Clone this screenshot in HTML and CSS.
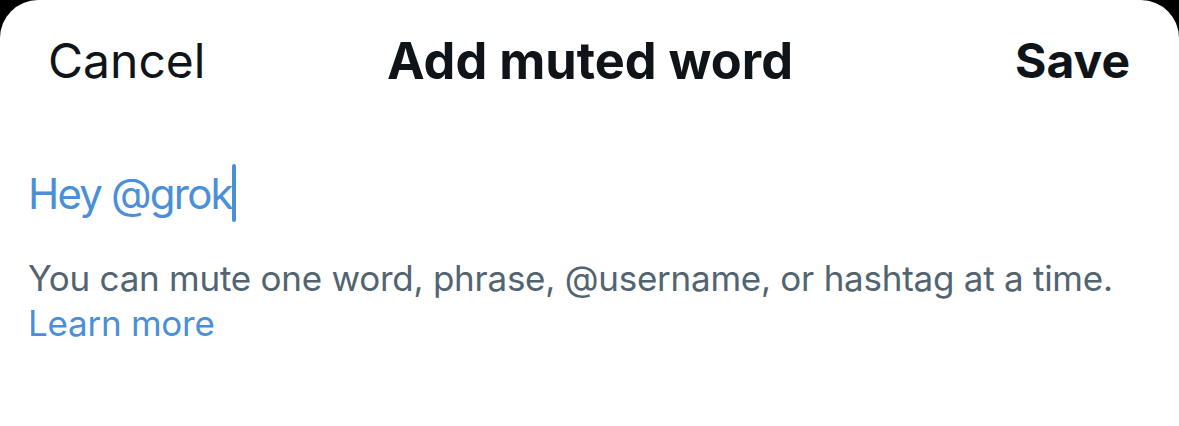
FILE: index.html
```html
<!DOCTYPE html>
<html lang="en">

<head>
     <meta charset="UTF-8">
     <meta name="viewport" content="width=device-width, initial-scale=1.0">
     <title>Add muted word</title>
     <link rel="stylesheet" href="styles.css">
</head>

<body>
     <div class="sheet">
          <div class="sheet-header">
               <span class="header-btn cancel">Cancel</span>
               <h1 class="title">Add muted word</h1>
               <span class="header-btn save">Save</span>
          </div>
          <div class="field">
               <span class="field-value">Hey @grok</span><span class="caret"></span>
          </div>
          <p class="hint">
               You can mute one word, phrase, @username, or hashtag at a time.<br>
               <span class="link">Learn more</span>
          </p>
     </div>
</body>

</html>
```

FILE: styles.css
```css
html,
body {
  margin: 0;
  padding: 0;
  background: #000;
}

.sheet {
  width: 1179px;
  height: 426px;
  background: #fff;
  border-radius: 38px 38px 0 0;
  overflow: hidden;
}

.sheet-header {
  display: grid;
  grid-template-columns: 1fr auto 1fr;
  align-items: center;
  height: 120px;
  padding: 0 49px 0 50px;
  font-family: Inter, "Liberation Sans", sans-serif;
  color: #0f1419;
}

.header-btn {
  font-size: 48px;
}

.cancel {
  font-weight: 400;
  justify-self: start;
  margin-left: -2px;
}

.save {
  font-weight: 700;
  justify-self: end;
}

.title {
  margin: 0;
  font-size: 50.5px;
  font-weight: 700;
}

.field {
  display: flex;
  align-items: center;
  height: 66px;
  margin-top: 40px;
  padding-left: 28px;
}

.field-value {
  font-family: Inter, "Liberation Sans", sans-serif;
  font-size: 42px;
  letter-spacing: -1.8px;
  color: #4a8fd8;
}

.caret {
  width: 4px;
  height: 58px;
  margin-left: 0;
  border-radius: 2px;
  background: #4a8fd8;
}

.hint {
  margin: 30px 0 0;
  padding-left: 28px;
  font-family: Inter, "Liberation Sans", sans-serif;
  font-size: 35px;
  letter-spacing: -0.25px;
  line-height: 45px;
  color: #536471;
}

.link {
  color: #4a8fd8;
}
```
